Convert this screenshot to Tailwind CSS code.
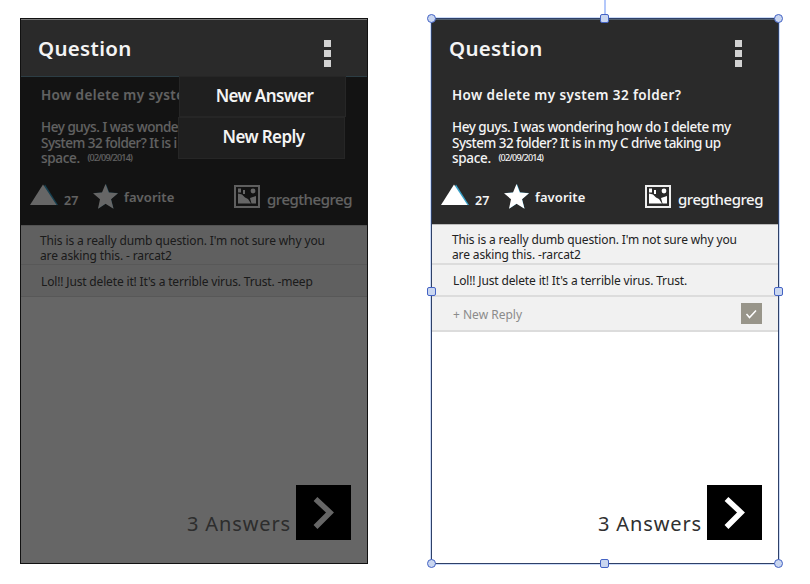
<!DOCTYPE html>
<html lang="en">
<head>
<meta charset="utf-8">
<title>Question screens</title>
<script src="https://cdn.jsdelivr.net/npm/@tailwindcss/browser@4"></script>
</head>
<body class="w-[810px] h-[584px] overflow-hidden bg-white font-['Noto_Sans','Open_Sans',sans-serif]">
<main class="flex gap-[63px] pl-5 pt-[18px]">

  <!-- Screen with the menu open -->
  <section class="relative w-[348px] h-[546px] border border-[#111] bg-white flex flex-col">
    <header class="h-[58px] shrink-0 bg-[#2a2a2a] border-t border-[#777] flex justify-between pl-[17px] pr-[36px]">
      <h1 class="pt-[12px] text-[20.5px] leading-[32px] font-semibold tracking-[0.3px] text-[#f4f4f4] whitespace-nowrap">Question</h1>
      <div class="flex flex-col gap-[3px] pt-[20px]"><i class="block w-[7px] h-[7px] bg-[#d2d2d2]"></i><i class="block w-[7px] h-[7px] bg-[#d2d2d2]"></i><i class="block w-[7px] h-[7px] bg-[#d2d2d2]"></i></div>
    </header>
    <div class="h-[148px] shrink-0 bg-[#313131] text-[#f4f4f4] flex flex-col">
      <h2 class="pl-5 pt-[8px] text-[13.5px] leading-[20px] font-semibold tracking-[0.4px] whitespace-nowrap">How delete my syste</h2>
      <p class="pl-5 pt-[15px] text-[13.5px] leading-[15.5px] font-medium whitespace-nowrap"><span class="tracking-[-0.45px]">Hey guys. I was wonde</span><br><span class="tracking-[-0.5px]">System 32 folder? It is i</span><br><span class="tracking-[-0.3px]">space.</span> <span class="relative -top-[2px] ml-[4px] text-[9px] leading-none tracking-[-0.75px]">(02/09/2014)</span></p>
      <div class="flex items-start pl-[9px] pt-[17px]">
        <svg class="w-[28px] h-[22px]" viewBox="0 0 28 22"><path d="M15 .5L28 21H4z" fill="#38a0c8"/><path d="M13 .5L26.500 21H0z" fill="#fff"/></svg>
        <span class="ml-[6px] mt-[8px] w-[29px] text-[12.500px] leading-[17px] font-semibold">27</span>
        <svg class="w-[25px] h-[26px]" viewBox="0 0 25 26"><path d="M13 0l3.300 8.500 8.700.4-7 6 2.500 9.500-7.500-5-7.500 5 2.500-9.500-7-6 9-.4z" fill="#38a0c8"/><path d="M12.500 0l3.300 8.500 9.200.7-7 6 2.500 9.500-8-5-7.500 5L7 15.200l-7-6 9-.7z" fill="#fff"/></svg>
        <span class="ml-[6px] mt-[4px] w-[110px] text-[13px] leading-[18px] font-semibold tracking-[.08px]">favorite</span>
        <svg class="mt-[1px] w-[26px] h-[23px]" viewBox="0 0 26 23"><path fill="none" stroke="#eee" stroke-width="2" d="M1 1h24v21H1z"/><path fill="#fff" d="M4 18.500V8.500l4 1 3 3 3 1.500 3 4.500zM16 13l6-2v7.500h-4.500zM4 3.500h3v4H4zM9 5h2v4H9z"/><circle cx="19" cy="6" r="2.400" fill="#fff"/></svg>
        <span class="ml-[7px] mt-[5px] text-[15px] leading-[20px] font-medium tracking-[-0.48px] whitespace-nowrap">gregthegreg</span>
      </div>
    </div>
    <p class="h-[39px] shrink-0 bg-[#f1f1f1] border-t border-[#ccc] pl-[19px] pt-[7px] text-[12px] leading-[15px] tracking-[-0.125px] text-[#444] whitespace-nowrap">This is a really dumb question. I'm not sure why you<br>are asking this. - rarcat2</p>
    <p class="h-[33px] shrink-0 bg-[#f1f1f1] border-y border-[#ddd] pl-[20px] pt-[9px] text-[12px] leading-[16px] tracking-[-0.16px] text-[#444] whitespace-nowrap">Lol!! Just delete it! It's a terrible virus. Trust. -meep</p>
    <footer class="mt-auto flex justify-end items-start h-[78px] pr-[16px]">
      <span class="mt-[25px] mr-[5px] text-[20px] leading-[28px] tracking-[0.87px] text-[#707070] whitespace-nowrap">3 Answers</span>
      <svg class="w-[55px] h-[55px] bg-black" viewBox="0 0 55 55"><path d="M19.500 14L34 27.500 19.500 42" fill="none" stroke="#fff" stroke-width="5.500"/></svg>
    </footer>
    <div class="absolute inset-x-0 top-[57px] bottom-0 bg-black/60 border-t border-[#2c3d44]"></div>
    <nav class="absolute left-[157px] top-[57px] text-[17px] font-semibold tracking-[-0.6px] text-[#f4f4f4] text-center whitespace-nowrap">
      <div class="ml-px w-[167px] h-[41px] bg-[#1f1f1f] border border-[#262626] leading-[37px] pl-[4px]">New Answer</div>
      <div class="w-[167px] h-[42px] bg-[#1f1f1f] border border-[#262626] leading-[37px] pl-[4px]">New Reply</div>
    </nav>
  </section>

  <!-- Selected screen with the reply box -->
  <section class="relative w-[348px] h-[546px] border border-[#2f4168] bg-white flex flex-col outline outline-[#a9c3f5]/60">
    <header class="h-[58px] shrink-0 bg-[#2a2a2a] border-t border-[#53606f] flex justify-between pl-[17px] pr-[36px]">
      <h1 class="pt-[12px] text-[20.5px] leading-[32px] font-semibold tracking-[0.3px] text-[#f4f4f4] whitespace-nowrap">Question</h1>
      <div class="flex flex-col gap-[3px] pt-[20px]"><i class="block w-[7px] h-[7px] bg-[#d2d2d2]"></i><i class="block w-[7px] h-[7px] bg-[#d2d2d2]"></i><i class="block w-[7px] h-[7px] bg-[#d2d2d2]"></i></div>
    </header>
    <div class="h-[147px] shrink-0 bg-[#2a2a2a] text-[#f4f4f4] flex flex-col">
      <h2 class="pl-5 pt-[8px] text-[13.5px] leading-[20px] font-semibold tracking-[0.4px] whitespace-nowrap">How delete my system 32 folder?</h2>
      <p class="pl-5 pt-[15px] text-[13.5px] leading-[15.5px] font-medium whitespace-nowrap"><span class="tracking-[-0.47px]">Hey guys. I was wondering how do I delete my</span><br><span class="tracking-[-0.52px]">System 32 folder? It is in my C drive taking up</span><br><span class="tracking-[-0.3px]">space.</span> <span class="relative -top-[2px] ml-[4px] text-[9px] leading-none tracking-[-0.75px]">(02/09/2014)</span></p>
      <div class="flex items-start pl-[9px] pt-[17px]">
        <svg class="w-[28px] h-[22px]" viewBox="0 0 28 22"><path d="M15 .5L28 21H4z" fill="#38a0c8"/><path d="M13 .5L26.500 21H0z" fill="#fff"/></svg>
        <span class="ml-[6px] mt-[8px] w-[29px] text-[12.500px] leading-[17px] font-semibold">27</span>
        <svg class="w-[25px] h-[26px]" viewBox="0 0 25 26"><path d="M13 0l3.300 8.500 8.700.4-7 6 2.500 9.500-7.500-5-7.500 5 2.500-9.500-7-6 9-.4z" fill="#38a0c8"/><path d="M12.500 0l3.300 8.500 9.200.7-7 6 2.500 9.500-8-5-7.500 5L7 15.200l-7-6 9-.7z" fill="#fff"/></svg>
        <span class="ml-[6px] mt-[4px] w-[110px] text-[13px] leading-[18px] font-semibold tracking-[.08px]">favorite</span>
        <svg class="mt-[1px] w-[26px] h-[23px]" viewBox="0 0 26 23"><path fill="none" stroke="#eee" stroke-width="2" d="M1 1h24v21H1z"/><path fill="#fff" d="M4 18.500V8.500l4 1 3 3 3 1.500 3 4.500zM16 13l6-2v7.500h-4.500zM4 3.500h3v4H4zM9 5h2v4H9z"/><circle cx="19" cy="6" r="2.400" fill="#fff"/></svg>
        <span class="ml-[7px] mt-[5px] text-[15px] leading-[20px] font-medium tracking-[-0.48px] whitespace-nowrap">gregthegreg</span>
      </div>
    </div>
    <p class="h-[39px] shrink-0 bg-[#f1f1f1] border-t border-[#bbb] pl-[20px] pt-[7px] text-[12px] leading-[15px] tracking-[-0.125px] text-[#222] whitespace-nowrap">This is a really dumb question. I'm not sure why you<br>are asking this. -rarcat2</p>
    <p class="h-[32px] shrink-0 bg-[#f1f1f1] border-t-2 border-[#dcdcdc] pl-[21px] pt-[8px] text-[12px] leading-[16px] tracking-[-0.15px] text-[#222] whitespace-nowrap">Lol!! Just delete it! It's a terrible virus. Trust.</p>
    <div class="h-[37px] shrink-0 bg-[#f1f1f1] border-y-2 border-[#dcdcdc] pl-[21px] pr-[16px] flex justify-between items-start text-[12px] leading-[36px] text-[#8b8b8b]">
      <span>+ New Reply</span>
      <svg class="mt-[6px] w-[21px] h-[21px] bg-[#98958a]" viewBox="0 0 21 21"><path d="M5.500 11l3 3.500L15 7.500" fill="none" stroke="#fff" stroke-width="1.500"/></svg>
    </div>
    <footer class="mt-auto flex justify-end items-start h-[78px] pr-[16px]">
      <span class="mt-[25px] mr-[5px] text-[20px] leading-[28px] tracking-[0.87px] text-[#303030] whitespace-nowrap">3 Answers</span>
      <svg class="w-[55px] h-[55px] bg-black" viewBox="0 0 55 55"><path d="M19.500 14L34 27.500 19.500 42" fill="none" stroke="#fff" stroke-width="5.500"/></svg>
    </footer>
    <!-- Selection handles -->
    <i class="absolute left-[172px] -top-[19px] w-[2px] h-[16px] bg-[#b4c8fa]"></i>
    <i class="absolute -left-[5px] -top-[5px] size-[9px] rounded-full bg-[#c9d6f0] border border-[#4463c4]"></i>
    <i class="absolute left-[168px] -top-[5px] size-[9px] rounded-[2px] bg-[#c9d6f0] border border-[#4463c4]"></i>
    <i class="absolute -right-[5px] -top-[5px] size-[9px] rounded-full bg-[#c9d6f0] border border-[#4463c4]"></i>
    <i class="absolute -left-[5px] top-[268px] size-[9px] rounded-[2px] bg-[#c9d6f0] border border-[#4463c4]"></i>
    <i class="absolute -right-[5px] top-[268px] size-[9px] rounded-[2px] bg-[#c9d6f0] border border-[#4463c4]"></i>
    <i class="absolute -left-[5px] -bottom-[5px] size-[9px] rounded-full bg-[#c9d6f0] border border-[#4463c4]"></i>
    <i class="absolute left-[168px] -bottom-[5px] size-[9px] rounded-[2px] bg-[#c9d6f0] border border-[#4463c4]"></i>
    <i class="absolute -right-[5px] -bottom-[5px] size-[9px] rounded-full bg-[#c9d6f0] border border-[#4463c4]"></i>
  </section>
</main>
</body>
</html>
